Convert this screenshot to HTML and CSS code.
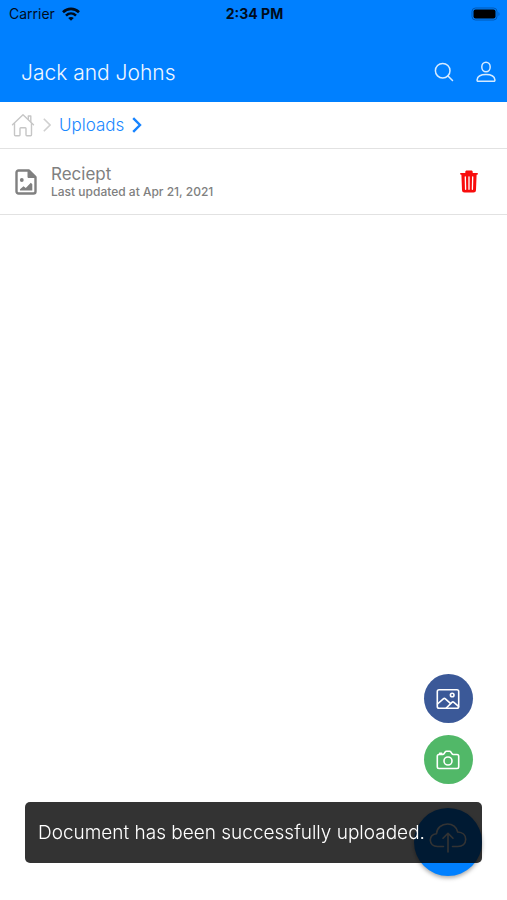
FILE: index.html
```html
<!DOCTYPE html>
<html lang="en">
  <head>
    <meta charset="UTF-8" />
    <meta name="viewport" content="width=device-width, initial-scale=1.0" />
    <title>Uploads</title>
    <link rel="stylesheet" href="styles.css">
  </head>
  <body>
    <div class="uploads-container">
      <div class="status-bar">
        <div class="carrier">
          <span>Carrier</span>
          <svg width="20" height="14" viewBox="0 0 18 14" fill="none" stroke="#000c1c" stroke-width="2.600">
            <path d="M1 5.200C5.500.8 12.500.8 17 5.200" />
            <path d="M4 8.600c2.900-2.800 7.100-2.800 10 0" />
            <path d="M9 13.800 6.200 11c1.600-1.500 4-1.500 5.600 0z" fill="#000c1c" stroke="none" />
          </svg>
        </div>
        <span class="time">2:34 PM</span>
        <svg class="battery" width="29" height="14" viewBox="0 0 29 14">
          <rect x="1" y="1" width="25" height="12" rx="3.500" fill="none" stroke="#0058b5" />
          <rect x="2.500" y="2.500" width="22" height="9" rx="2" fill="#000" />
          <path d="M27.500 5c1.300.700 1.300 3.300 0 4z" fill="#0058b5" />
        </svg>
      </div>

      <header>
        <h1>Jack and Johns</h1>
        <button type="button" class="icon-button" aria-label="Search">
          <svg width="20" height="20" viewBox="0 0 20 20" fill="none" stroke="#d5eaff" stroke-width="1.500" stroke-linecap="round">
            <circle cx="8.700" cy="8.700" r="7.300" />
            <path d="m14 14 4.500 4.500" />
          </svg>
        </button>
        <button type="button" class="icon-button" aria-label="Profile">
          <svg width="20" height="22" viewBox="0 0 20 22" fill="none" stroke="#d5eaff" stroke-width="1.500" stroke-linejoin="round">
            <ellipse cx="10" cy="6" rx="4.200" ry="4.800" />
            <path d="M2.300 20.300c-.9 0-1.300-.5-1.200-1.400.4-3.500 4.200-5.300 8.900-5.300s8.500 1.800 8.900 5.300c.1.900-.3 1.400-1.200 1.400z" />
          </svg>
        </button>
      </header>

      <nav class="breadcrumb">
        <a href="#" class="home-link" aria-label="Home">
          <svg width="24" height="24" viewBox="0 0 24 24" fill="none" stroke="#c6c6c6" stroke-width="1.400" stroke-linejoin="round" stroke-linecap="round">
            <path d="M1.500 11.800 12 1.800l10.500 10" />
            <path d="M17.300 6.500V3h2.500v5.800" />
            <path d="M3.500 10.500v11.300c0 .6.400.9.900.9h3.800c.5 0 .8-.3.800-.9v-6.300c0-.5.300-.8.800-.8h4.400c.5 0 .8.300.8.800v6.300c0 .6.300.9.800.9h3.800c.5 0 .9-.3.900-.9V10.500" />
          </svg>
        </a>
        <svg width="8" height="14" viewBox="0 0 8 14" fill="none" stroke="#d0d0d0" stroke-width="1.600">
          <path d="m.8.800 6.200 6.200-6.200 6.200" />
        </svg>
        <a href="#" class="current">Uploads</a>
        <svg width="10" height="16" viewBox="0 0 10 16" fill="none" stroke="#1784ff" stroke-width="2.400">
          <path d="m1.200 1.200 6.800 6.800-6.800 6.800" />
        </svg>
      </nav>

      <ul class="file-list">
        <li class="file-row">
          <svg width="22" height="26" viewBox="0 0 22 26">
            <path d="M3.500 1.500H14l6.500 6.500v14.500a2 2 0 0 1-2 2h-15a2 2 0 0 1-2-2v-19a2 2 0 0 1 2-2z" fill="none" stroke="#808080" stroke-width="2.400" stroke-linejoin="round" />
            <path d="M13 1.500V8.500h7.500z" fill="#808080" stroke="#808080" />
            <circle cx="6.800" cy="11" r="1.900" fill="#808080" />
            <path d="M5 21.500v-1.300l3.500-3 2.300 1.800 5-5.300 1.500 1.500v6.300z" fill="#808080" />
          </svg>
          <div class="file-info">
            <span class="file-name">Reciept</span>
            <span class="file-date">Last updated at Apr 21, 2021</span>
          </div>
          <button type="button" class="icon-button" aria-label="Delete">
            <svg width="20" height="23" viewBox="0 0 20 23">
              <path d="M6.300 3V2c0-1 .5-1.500 1.500-1.500h4.400c1 0 1.500.5 1.500 1.500v1H18c.7 0 1 .3 1 .8s-.3.900-1 .900h-.4l-.6 15.300c-.1 1.700-.9 2.500-2.500 2.500h-9c-1.600 0-2.400-.8-2.500-2.500L2.400 4.700H2c-.7 0-1-.4-1-.9S1.300 3 2 3z" fill="#f80d0d" />
              <path d="m6.300 6.800.3 12.500M10 6.800v12.500M13.700 6.800l-.3 12.500" stroke="#fff" stroke-width="1.300" stroke-linecap="round" />
            </svg>
          </button>
        </li>
      </ul>
    </div>

    <!-- Upload actions -->
    <div class="upload-actions">
      <button type="button" class="action gallery" aria-label="Choose from gallery">
        <svg width="24" height="22" viewBox="0 0 24 22" fill="none" stroke="#fff" stroke-width="1.600" stroke-linejoin="round" stroke-linecap="round">
          <rect x="1.300" y="1.800" width="21.400" height="18.400" rx="1.800" />
          <circle cx="16.200" cy="7" r="1.800" />
          <path d="m1.500 16 5.800-5.200c.7-.6 1.400-.6 2.100 0l5 4.500" />
          <path d="m10.300 20 5.600-5.600c.6-.6 1.300-.6 2 0l4.600 4" />
        </svg>
      </button>
      <button type="button" class="action camera" aria-label="Take a photo">
        <svg width="24" height="20" viewBox="0 0 24 20" fill="none" stroke="#fff" stroke-width="1.600" stroke-linejoin="round" stroke-linecap="round">
          <path d="M3 4.500h3.700c.6 0 1-.3 1.300-.7l1-1.600c.4-.6.800-.9 1.500-.9h3c.7 0 1.100.3 1.500.9l1 1.600c.3.400.7.700 1.300.7H21c1.100 0 1.700.6 1.700 1.700v10.600c0 1.100-.6 1.700-1.700 1.700H3c-1.100 0-1.700-.6-1.700-1.700V6.200c0-1.100.6-1.700 1.700-1.700z" />
          <path d="M3.700 4.300V3.200h2v1.100" />
          <circle cx="12" cy="11" r="4" />
        </svg>
      </button>
      <button type="button" class="action upload" aria-label="Upload">
        <svg width="38" height="32" viewBox="0 0 38 32" fill="none" stroke="#fff" stroke-width="1.600" stroke-linejoin="round" stroke-linecap="round">
          <path d="M14.500 24.500H8.500c-4.300 0-7.200-2.600-7.200-6.400 0-3.600 2.600-6 6.200-6.400C8 6 12.500 2 18.500 2c5 0 9.300 3.200 10.200 8 4.700.2 8 3.100 8 7.300 0 4.400-3.300 7.200-8 7.200h-5.200" />
          <path d="M19 30V11.500M14 16.300l5-5 5 5" />
        </svg>
      </button>
    </div>

    <div class="toast" role="status">Document has been successfully uploaded.</div>
  </body>
</html>
```

FILE: styles.css
```css
* {
  box-sizing: border-box;
  margin: 0;
  padding: 0;
}

body {
  font-family: "Inter", -apple-system, BlinkMacSystemFont, "Segoe UI", sans-serif;
  background-color: #ffffff;
  color: #808080;
  min-height: 100vh;
}

svg {
  display: block;
  flex-shrink: 0;
}

button {
  border: none;
  background: none;
  cursor: pointer;
}

a {
  text-decoration: none;
}

/* Status bar */
.status-bar {
  background-color: #0080ff;
  color: #000c1c;
  display: grid;
  grid-template-columns: 1fr auto 1fr;
  align-items: center;
  height: 27px;
  padding: 0 7px 0 9px;
  font-size: 14px;
}

.carrier {
  display: flex;
  align-items: center;
  gap: 6px;
}

.time {
  font-weight: 700;
}

.battery {
  justify-self: end;
}

/* Header */
header {
  background-color: #0080ff;
  display: flex;
  align-items: center;
  gap: 22px;
  padding: 32px 11px 17px 21px;
  min-height: 75px;
}

header h1 {
  flex-grow: 1;
  font-size: 21px;
  font-weight: 300;
  color: #f0f7ff;
}

.icon-button {
  display: flex;
  align-items: center;
  justify-content: center;
}

/* Breadcrumb */
.breadcrumb {
  display: flex;
  align-items: center;
  gap: 8px;
  height: 47px;
  padding: 0 11px;
  border-bottom: 1px solid #e2e2e2;
}

.current {
  font-size: 17px;
  font-weight: 300;
  color: #1a88ff;
}

/* File list */
.file-list {
  list-style: none;
}

.file-row {
  display: flex;
  align-items: center;
  gap: 14px;
  min-height: 66px;
  padding: 0 28px 0 15px;
  border-bottom: 1px solid #e2e2e2;
}

.file-info {
  display: flex;
  flex-direction: column;
  flex-grow: 1;
}

.file-name {
  font-size: 17px;
  line-height: 20px;
}

.file-date {
  font-size: 12px;
  font-weight: 500;
  line-height: 16px;
}

/* Floating buttons */
.upload-actions {
  position: fixed;
  right: 25px;
  bottom: 24px;
  display: flex;
  flex-direction: column;
  align-items: center;
  gap: 12px;
}

.action {
  display: flex;
  align-items: center;
  justify-content: center;
  width: 49px;
  height: 49px;
  border-radius: 50%;
}

.gallery {
  background-color: #3b5998;
}

.camera {
  background-color: #51b868;
}

.upload {
  width: 68px;
  height: 68px;
  margin-top: 12px;
  padding-bottom: 8px;
  background-color: #0080ff;
  box-shadow: 0 2px 4px rgba(0, 0, 0, 0.35);
}

/* Toast covers the upload button */
.toast {
  position: fixed;
  left: 25px;
  right: 25px;
  bottom: 37px;
  padding: 18px 13px;
  border-radius: 5px;
  background-color: rgba(0, 0, 0, 0.8);
  color: #ffffff;
  font-size: 19px;
  font-weight: 300;
  line-height: 25px;
}
```
